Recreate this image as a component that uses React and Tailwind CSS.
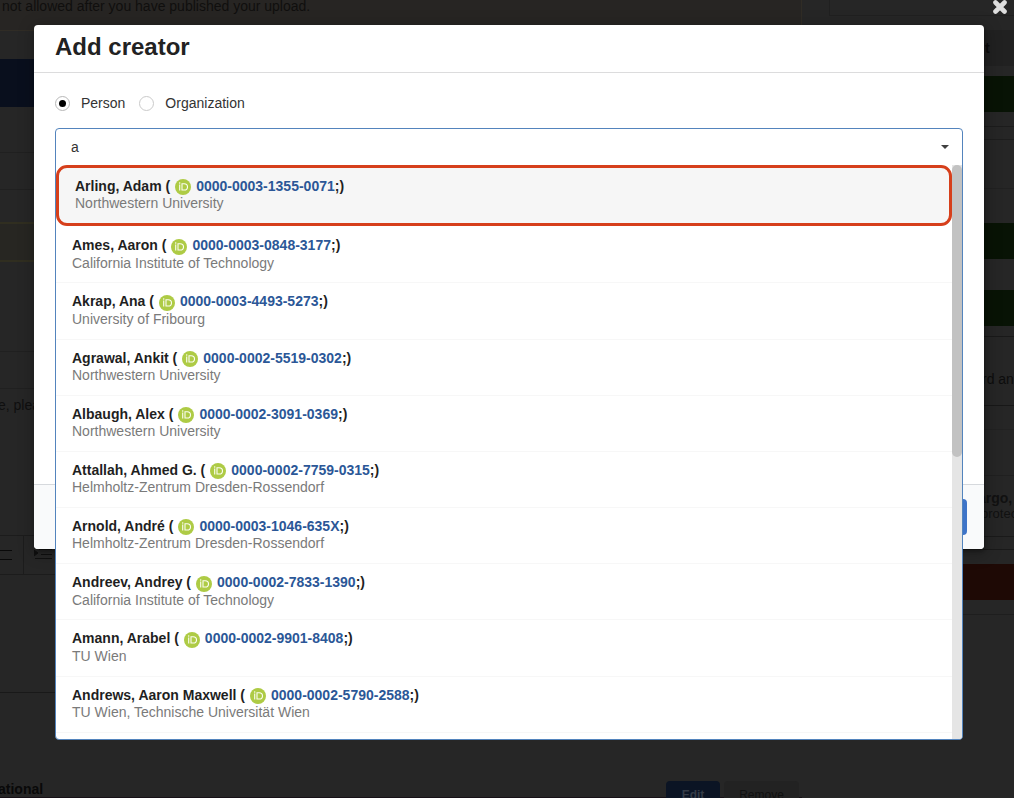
import React from "react";

const people = [
  ["Ames, Aaron", "0000-0003-0848-3177", "California Institute of Technology"],
  ["Akrap, Ana", "0000-0003-4493-5273", "University of Fribourg"],
  ["Agrawal, Ankit", "0000-0002-5519-0302", "Northwestern University"],
  ["Albaugh, Alex", "0000-0002-3091-0369", "Northwestern University"],
  ["Attallah, Ahmed G.", "0000-0002-7759-0315", "Helmholtz-Zentrum Dresden-Rossendorf"],
  ["Arnold, André", "0000-0003-1046-635X", "Helmholtz-Zentrum Dresden-Rossendorf"],
  ["Andreev, Andrey", "0000-0002-7833-1390", "California Institute of Technology"],
  ["Amann, Arabel", "0000-0002-9901-8408", "TU Wien"],
  ["Andrews, Aaron Maxwell", "0000-0002-5790-2588", "TU Wien, Technische Universität Wien"],
];

function OrcidIcon() {
  return (
    <svg viewBox="0 0 16 16" className="ml-[5px] mr-[5px] mt-[2.7px] h-4 w-4 shrink-0">
      <circle cx="8" cy="8" r="8" fill="#aecb45" />
      <g fill="none" stroke="#fbfdf2" strokeWidth="1.1">
        <path d="M4.7 5.5v6" />
        <path d="M7 4.8v6.200h2.1c2.1 0 3.4-1.3 3.4-3.1S11.200 4.800 9.100 4.800z" />
      </g>
      <circle cx="4.700" cy="3.900" r=".75" fill="#fbfdf2" />
    </svg>
  );
}

function Person({ name, id, org }) {
  return (
    <>
      <div className="flex h-[18px] items-center whitespace-pre text-[14px] font-bold leading-[18px] text-[#1f1f1f]">
        <span>{name} (</span>
        <OrcidIcon />
        <span className="text-[#2b5797]">{id}</span>
        <span>;)</span>
      </div>
      <div className="mt-[0.32px] text-[14px] leading-[17px] text-[#7a7a7a]">{org}</div>
    </>
  );
}

function MainColumn() {
  return (
    <div className="flex w-[802px] shrink-0 flex-col overflow-hidden whitespace-nowrap">
      <div className="h-[31px] shrink-0 border-b border-r border-[#302c25] bg-[#272523] pl-[2px] text-[14px] leading-[13px] text-[#100f0e]">
        not allowed after you have published your upload.
      </div>
      <div className="h-[28px] shrink-0" />
      <div className="h-[48px] shrink-0 bg-[#090f1d]" />
      <div className="h-[46px] shrink-0 border-b border-[#202020]" />
      <div className="h-[37px] shrink-0 border-b border-[#202020]" />
      <div className="h-[32px] shrink-0" />
      <div className="h-[40px] shrink-0 border-y-2 border-[#302e20] bg-[#272622]" />
      <div className="h-[90px] shrink-0 border-b border-[#202020]" />
      <div className="h-[37px] shrink-0 border-b border-[#202020]" />
      <div className="h-[146px] shrink-0 pt-[8px] text-[14px] leading-[17px] text-[#0f0f0f]">
        <span className="-ml-[2px]">e, please</span>
      </div>
      <div className="flex h-[40px] shrink-0 border-y border-[#1c1c1c]">
        <div className="flex w-[24px] shrink-0 flex-col gap-2 border-r border-[#1c1c1c] pt-[14px]">
          <div className="h-px w-[12px] bg-[#090909]" />
          <div className="h-px w-[12px] bg-[#090909]" />
        </div>
        <svg viewBox="0 0 18 12" className="ml-[10px] mt-[12px] h-3 w-[18px]" stroke="#101010" fill="#101010">
          <path d="M0 2l4 3-4 3zM5 1.500h13M7 6.500h11M1 10.500h17" />
        </svg>
      </div>
      <div className="h-[118px] shrink-0 border-b border-[#191919]" />
      <div className="flex h-[105px] shrink-0 items-start border-b border-[#171117]">
        <div className="w-[666px] pt-[88px] text-[14px] font-bold leading-[17px] text-[#090909]">
          <span className="-ml-[2px]">ational</span>
        </div>
        <div className="mt-[88px] flex h-[17px] gap-[4px] overflow-hidden text-[12px] leading-[28px]">
          <div className="h-7 w-[54px] rounded-t bg-[#0b1424] text-center font-bold text-[#343b46]">Edit</div>
          <div className="h-7 w-[75px] rounded-t bg-[#222] text-center text-[#101010]">Remove</div>
        </div>
      </div>
    </div>
  );
}

function SideColumn() {
  return (
    <div className="ml-[27px] flex flex-1 flex-col overflow-hidden whitespace-nowrap">
      <div className="h-[16px] shrink-0 border-b border-l border-[#202020]" />
      <div className="h-[14px] shrink-0" />
      <div className="h-[36px] shrink-0 bg-[#212121] pl-[156px] text-[14px] font-bold leading-[36px] text-[#0c0c0c]">t</div>
      <div className="h-[10px] shrink-0" />
      <div className="h-[36px] shrink-0 bg-[#081305]" />
      <div className="h-[15px] shrink-0 border-b border-[#1c1c1c]" />
      <div className="h-[13px] shrink-0 border-b border-[#1d1d1d]" />
      <div className="h-[49px] shrink-0 border-b border-[#212121]" />
      <div className="h-[34px] shrink-0" />
      <div className="h-[36px] shrink-0 bg-[#081305]" />
      <div className="h-[31px] shrink-0" />
      <div className="h-[36px] shrink-0 bg-[#081305]" />
      <div className="h-[11px] shrink-0 border-b border-[#191919]" />
      <div className="h-[69px] shrink-0 border-b border-[#181818] pl-[153px] pt-[34px] text-[14px] leading-[17px] text-[#0d0d0d]">rd an</div>
      <div className="h-[24px] shrink-0 border-b border-[#222]" />
      <div className="h-[46px] shrink-0 border-b border-[#202020]" />
      <div className="h-[61px] shrink-0 border-b border-[#1a1a1a] pl-[149px] pt-[14px] leading-[16px] text-[#111]">
        <div className="text-[14px] font-bold">argo,</div>
        <div className="ml-[3px] text-[13px]">protect</div>
      </div>
      <div className="h-[13px] shrink-0 border-b border-[#191919]" />
      <div className="h-[14px] shrink-0" />
      <div className="h-[36px] shrink-0 bg-[#1e0905]" />
      <div className="h-[15px] shrink-0 border-b border-[#1e1e1e]" />
    </div>
  );
}

function CreatorDropdown() {
  return (
    <div className="absolute left-[55px] top-[128px] flex h-[612px] w-[908px] flex-col overflow-hidden rounded-[4px] border border-[#5384bd] bg-white">
      <div className="flex h-[36px] shrink-0 items-center justify-between pl-[15px] pr-[13px] text-[14px] text-[#333]">
        <span>a</span>
        <span className="h-0 w-0 border-x-4 border-t-4 border-x-transparent border-t-[#404040]" />
      </div>
      <div className="flex min-h-0 flex-1">
        <div className="flex min-w-0 flex-1 flex-col overflow-hidden">
          <div className="mb-[1.27px] h-[61px] shrink-0 rounded-[11px] border-3 border-[#d63f1b] bg-[#f6f6f6] pl-[16px] pt-[9px]">
            <Person name="Arling, Adam" id="0000-0003-1355-0071" org="Northwestern University" />
          </div>
          {people.map(([name, id, org]) => (
            <div key={id} className="h-[56.17px] shrink-0 border-b border-[#f7f7f7] pl-[16px] pt-[9.04px]">
              <Person name={name} id={id} org={org} />
            </div>
          ))}
        </div>
        <div className="w-[10px] shrink-0 bg-[#e5e5e5]">
          <div className="h-[292px] rounded-[5px] bg-[#c2c2c2]" />
        </div>
      </div>
    </div>
  );
}

export default function App() {
  return (
    <div className="relative h-[798px] w-[1014px] overflow-hidden bg-[#262626] font-['Liberation_Sans',Arial,sans-serif]">
      <div className="flex h-full">
        <MainColumn />
        <SideColumn />
      </div>
      <svg viewBox="0 0 16 16" className="absolute left-[992px] top-[-1px] h-4 w-4" stroke="#dedede" strokeWidth="4.600" strokeLinecap="round">
        <path d="M3.500 3.500l9 9M12.500 3.500l-9 9" />
      </svg>
      <div className="absolute left-[34px] top-[25px] flex h-[524px] w-[950px] flex-col overflow-hidden rounded-[4px] bg-white shadow-[1px_3px_3px_0_rgba(0,0,0,0.2),1px_3px_15px_2px_rgba(0,0,0,0.25)]">
        <h1 className="h-[48px] shrink-0 border-b border-[#dcdcdd] pl-[21px] text-[24px] font-bold leading-[44px] text-[#222]">
          Add creator
        </h1>
        <div className="flex flex-1 items-start pl-[21px] pt-[22px] text-[14px] leading-[17px] text-[#333]">
          <span className="mt-px flex h-[15px] w-[15px] items-center justify-center rounded-full border border-[#b8b8b8]">
            <span className="h-[7px] w-[7px] rounded-full bg-black" />
          </span>
          <span className="ml-[11px]">Person</span>
          <span className="ml-[14px] mt-px h-[15px] w-[15px] rounded-full border border-[#cacaca]" />
          <span className="ml-[11px]">Organization</span>
        </div>
        <div className="flex h-[65px] shrink-0 justify-end border-t border-[#d6d9dd] bg-[#f9fafb] pr-[17px] pt-[14px]">
          <div className="h-[36px] w-[80px] rounded-[4px] bg-[#3e74c8]" />
        </div>
      </div>
      <CreatorDropdown />
    </div>
  );
}
